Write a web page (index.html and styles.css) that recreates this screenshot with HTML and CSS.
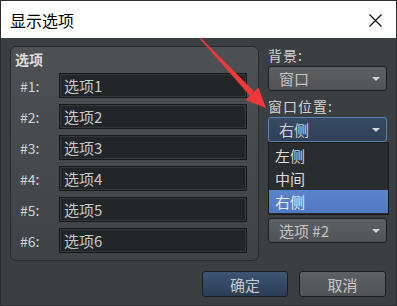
FILE: index.html
```html
<!DOCTYPE html>
<html>
<head>
    <title>显示选项</title>
    <link rel="stylesheet" href="styles.css">
</head>
<body>
    <div class="window">
        <div class="titlebar">
            <span class="title">显示选项</span>
            <svg class="close" width="13" height="13" viewBox="0 0 13 13">
                <path d="M0.5 0.5 L12.5 12.5 M12.5 0.5 L0.5 12.5" stroke="#000" stroke-width="1.1" fill="none"/>
            </svg>
        </div>

        <div class="content">
            <div class="main">
                <div class="group">
                    <div class="group-title">选项</div>
                    <div class="row"><span class="row-label">#1:</span><div class="field">选项1</div></div>
                    <div class="row"><span class="row-label">#2:</span><div class="field">选项2</div></div>
                    <div class="row"><span class="row-label">#3:</span><div class="field">选项3</div></div>
                    <div class="row"><span class="row-label">#4:</span><div class="field">选项4</div></div>
                    <div class="row"><span class="row-label">#5:</span><div class="field">选项5</div></div>
                    <div class="row"><span class="row-label">#6:</span><div class="field">选项6</div></div>
                </div>

                <div class="side">
                    <div class="side-label">背景:</div>
                    <div class="combo"><span>窗口</span><i class="caret"></i></div>

                    <div class="side-label">窗口位置:</div>
                    <div class="combo combo-focus"><span>右侧</span><i class="caret"></i></div>

                    <div class="combo combo-last"><span>选项 #2</span><i class="caret"></i></div>

                    <!-- open list of the position combo -->
                    <div class="popup">
                        <div class="popup-item">左侧</div>
                        <div class="popup-item">中间</div>
                        <div class="popup-item selected">右侧</div>
                    </div>
                </div>
            </div>

            <div class="buttons">
                <button class="btn btn-default">确定</button>
                <button class="btn">取消</button>
            </div>
        </div>

        <svg class="arrow" width="397" height="306" viewBox="0 0 397 306">
            <polygon points="200,39 201.5,38.5 254.2,91.6 249.9,95.8" fill="#f0383a"/>
            <polygon points="266,108 245.6,100 258.5,87.4" fill="#f0383a"/>
        </svg>
    </div>
</body>
</html>
```

FILE: styles.css
```css
body {
    margin: 0;
    font-family: "Noto Sans CJK SC", "Noto Sans", sans-serif;
    background-color: #2b2e33;
}

.window {
    position: relative;
    width: 397px;
    height: 306px;
    box-sizing: border-box;
    border: 1px solid #2a2c2f;
    background-color: #3c3f42;
    overflow: hidden;
}

.titlebar {
    height: 37px;
    background-color: #ffffff;
    display: flex;
    align-items: center;
    justify-content: space-between;
    padding: 0 14px 0 9px;
}

.title {
    font-size: 16px;
    color: #000000;
}

.close {
    display: block;
    margin-top: 2px;
}

.content {
    padding: 8px 9px 0 9px;
}

.main {
    display: flex;
    gap: 9px;
}

.group {
    width: 249px;
    height: 215px;
    box-sizing: border-box;
    border: 1px solid #27292b;
    border-radius: 6px;
    background: linear-gradient(#4d5154, #404346);
    padding: 3px 11px 0 9px;
}

.group-title {
    font-size: 14px;
    font-weight: bold;
    color: #dcdcdc;
    line-height: 18px;
    margin-left: -5px;
    margin-bottom: 5px;
}

.row {
    display: flex;
    align-items: center;
    height: 25px;
    margin-bottom: 6px;
}

.row-label {
    width: 39px;
    font-size: 14px;
    color: #d2d2d2;
}

.field {
    width: 188px;
    height: 25px;
    box-sizing: border-box;
    border: 1px solid #17181a;
    box-shadow: inset 0 0 0 1px #35393c;
    background-color: #232629;
    color: #c8c8c8;
    font-size: 15px;
    line-height: 23px;
    padding-left: 4px;
}

.side {
    position: relative;
    width: 119px;
}

.side-label {
    font-size: 14px;
    letter-spacing: 1px;
    color: #d2d2d2;
    line-height: 18px;
    margin-bottom: 2px;
}

.combo {
    height: 25px;
    box-sizing: border-box;
    border: 1px solid #1d2022;
    border-radius: 3px;
    background: linear-gradient(#5d6164, #4f5356);
    color: #c4c4c4;
    font-size: 15px;
    display: flex;
    align-items: center;
    justify-content: space-between;
    padding: 0 6px 0 10px;
    margin-bottom: 6px;
}

.combo-focus {
    border-color: #5c80a9;
    background: linear-gradient(#374b62, #2f4157);
    color: #cfd6de;
    margin-bottom: 0;
}

.combo-last {
    margin-top: 76px;
}

.caret {
    width: 0;
    height: 0;
    border-left: 4px solid transparent;
    border-right: 4px solid transparent;
    border-top: 4px solid #d6d6d6;
}

.popup {
    position: absolute;
    top: 96px;
    left: 0;
    width: 121px;
    box-sizing: border-box;
    border: 1px solid #17191b;
    background-color: #2a2d30;
    padding: 1px 0;
}

.popup-item {
    height: 23px;
    line-height: 23px;
    font-size: 15px;
    color: #dcdcdc;
    padding-left: 6px;
}

.popup-item.selected {
    background: linear-gradient(#5c84cc, #5079c2);
    color: #e6ecf5;
}

.buttons {
    display: flex;
    justify-content: flex-end;
    gap: 11px;
    margin-top: 10px;
    margin-right: 1px;
}

.btn {
    width: 87px;
    height: 26px;
    border: 1px solid #1c1f21;
    border-radius: 3px;
    background: linear-gradient(#5d6164, #4f5356);
    color: #c8c8c8;
    font-family: "Noto Sans CJK SC", sans-serif;
    font-size: 15px;
    padding: 0;
}

.btn-default {
    width: 86px;
    background: linear-gradient(#3e5674, #2b3d55);
}

.arrow {
    position: absolute;
    top: -1px;
    left: -1px;
    pointer-events: none;
}
```
